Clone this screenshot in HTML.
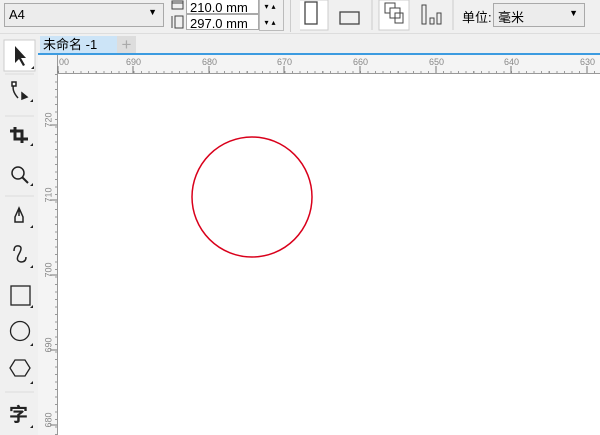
<!DOCTYPE html><html><head><style>
body{margin:0;width:600px;height:435px;overflow:hidden;background:#f0f0f0;font-family:"Liberation Sans","Noto Sans CJK SC",sans-serif;position:relative}
.a{position:absolute}
.box{position:absolute;border:1px solid #a9a9a9;background:#fff;font-size:13px;box-sizing:border-box}
.rl{position:absolute;font-size:9px;color:#888}
</style></head><body>
<div class="box" style="left:4px;top:3px;width:160px;height:24px;background:#ececec;padding:3px 4px">A4<span class="a" style="right:6px;top:3px;font-size:9px">▼</span></div>
<svg class="a" style="left:170px;top:0" width="16" height="32"><rect x="2" y="1" width="11" height="8" fill="none" stroke="#444"/><line x1="2" y1="3" x2="13" y2="3" stroke="#444"/><rect x="5" y="16" width="8" height="12" fill="none" stroke="#444"/><line x1="2" y1="16" x2="2" y2="28" stroke="#444"/></svg>
<div class="box" style="left:186px;top:-2px;width:73px;height:16px;padding:1px 3px">210.0 mm</div>
<div class="box" style="left:186px;top:14px;width:73px;height:16px;padding:1px 3px">297.0 mm</div>
<div class="a" style="left:259px;top:-2px;width:23px;height:31px;background:#f0f0f0;border:1px solid #bbb;font-size:8px;line-height:16px;text-align:center;letter-spacing:3px">▾▴<br>▾▴</div>
<div class="a" style="left:290px;top:0;width:1px;height:32px;background:#ccc"></div>
<svg class="a" style="left:300px;top:0" width="300" height="32">
<rect x="-2" y="0" width="30" height="30" fill="#fff" stroke="#ccc"/>
<rect x="5" y="2" width="12" height="22" fill="none" stroke="#444" stroke-width="1.3"/>
<rect x="40" y="12" width="19" height="12" fill="none" stroke="#444" stroke-width="1.3"/>
<line x1="72" y1="0" x2="72" y2="30" stroke="#ccc"/>
<rect x="79" y="0" width="30" height="30" fill="#fff" stroke="#ccc"/>
<rect x="85" y="3" width="10" height="10" fill="none" stroke="#444"/><rect x="90" y="8" width="10" height="10" fill="#fff" stroke="#444"/><rect x="95" y="13" width="8" height="10" fill="none" stroke="#444"/>
<rect x="122" y="5" width="4" height="19" fill="none" stroke="#444"/><rect x="130" y="18" width="4" height="6" fill="none" stroke="#444"/><rect x="137" y="13" width="4" height="11" fill="none" stroke="#444"/>
<line x1="153" y1="0" x2="153" y2="30" stroke="#ccc"/>
<line x1="591" y1="0" x2="591" y2="30" stroke="#ccc"/>
</svg>
<div class="a" style="left:462px;top:7px;font-size:13px">单位:</div>
<div class="box" style="left:493px;top:3px;width:92px;height:24px;background:#ececec;padding:3px 4px">毫米<span class="a" style="right:6px;top:4px;font-size:9px">▼</span></div>
<div class="a" style="left:0;top:33px;width:600px;height:1px;background:#ddd"></div>
<div class="a" style="left:40px;top:36px;width:76px;height:18px;background:#cce4f7;font-size:13px;padding-left:3px;line-height:18px">未命名 -1</div>
<div class="a" style="left:117px;top:36px;width:19px;height:18px;background:#ddd;color:#aaa;font-size:17px;text-align:center;line-height:17px">+</div>
<div class="a" style="left:38px;top:53px;width:562px;height:2px;background:#3c9be0"></div>
<div class="a" style="left:38px;top:55px;width:562px;height:18px;background:#f4f4f4;border-bottom:1px solid #999"></div>
<div class="a" style="left:58px;top:71px;width:542px;height:2px;background:repeating-linear-gradient(90deg,#999 0 1px,transparent 1px 7.55px)"></div>
<div class="a" style="left:38px;top:55px;width:19px;height:380px;background:#f4f4f4;border-right:1px solid #999"></div>
<div class="a" style="left:55px;top:74px;width:2px;height:361px;background:repeating-linear-gradient(180deg,#999 0 1px,transparent 1px 7.5px)"></div>
<svg class="a" style="left:0;top:0" width="600" height="435">
<g stroke="#777">
<line x1="133" y1="66" x2="133" y2="73"/><line x1="209" y1="66" x2="209" y2="73"/><line x1="284" y1="66" x2="284" y2="73"/><line x1="360" y1="66" x2="360" y2="73"/><line x1="436" y1="66" x2="436" y2="73"/><line x1="511" y1="66" x2="511" y2="73"/><line x1="587" y1="66" x2="587" y2="73"/><line x1="58" y1="66" x2="58" y2="73"/>
<line x1="50" y1="125" x2="57" y2="125"/><line x1="50" y1="200" x2="57" y2="200"/><line x1="50" y1="275" x2="57" y2="275"/><line x1="50" y1="350" x2="57" y2="350"/><line x1="50" y1="425" x2="57" y2="425"/>
</g>
</svg>
<div class="rl" style="left:59px;top:57px">00</div>
<div class="rl" style="left:126px;top:57px">690</div><div class="rl" style="left:202px;top:57px">680</div><div class="rl" style="left:277px;top:57px">670</div><div class="rl" style="left:353px;top:57px">660</div><div class="rl" style="left:429px;top:57px">650</div><div class="rl" style="left:504px;top:57px">640</div><div class="rl" style="left:580px;top:57px">630</div>
<div class="rl" style="left:41px;top:115px;transform:rotate(-90deg)">720</div><div class="rl" style="left:41px;top:190px;transform:rotate(-90deg)">710</div><div class="rl" style="left:41px;top:265px;transform:rotate(-90deg)">700</div><div class="rl" style="left:41px;top:340px;transform:rotate(-90deg)">690</div><div class="rl" style="left:41px;top:415px;transform:rotate(-90deg)">680</div>
<div class="a" style="left:58px;top:74px;width:542px;height:361px;background:#fff"></div>
<svg class="a" style="left:58px;top:74px" width="542" height="361"><circle cx="194" cy="123" r="60" fill="none" stroke="#d9001b" stroke-width="1.5"/></svg>
<svg class="a" style="left:0;top:36px" width="38" height="399">
<rect x="4" y="4" width="31" height="31" fill="#fff" stroke="#ccc"/>
<path d="M15 10 L15 27 L19 23 L23 30 L25 29 L21 22 L26 22 Z" fill="#222"/>
<g fill="#222"><path d="M31 33 l3 0 l0 -3z"/><path d="M30 66 l3 0 l0 -3z"/><path d="M30 110 l3 0 l0 -3z"/><path d="M30 150 l3 0 l0 -3z"/><path d="M30 192 l3 0 l0 -3z"/><path d="M30 232 l3 0 l0 -3z"/><path d="M30 272 l3 0 l0 -3z"/><path d="M30 310 l3 0 l0 -3z"/><path d="M30 348 l3 0 l0 -3z"/><path d="M30 392 l3 0 l0 -3z"/></g>
<g fill="none" stroke="#222" stroke-width="1.5">
<path d="M14 48 q-3 6 4 14"/><rect x="12" y="46" width="4" height="4" fill="#fff"/>
<path d="M22 57 l5 4 l-5 2z" fill="#222"/>
<path d="M15 91 v12 h13 M10 95 h12 v12" stroke-width="3"/>
<circle cx="18" cy="137" r="6"/><path d="M22 141 l6 6" stroke-width="2"/>
<path d="M19 172 l-4 9 l0 5 h8 v-5 z M19 172 v8"/>
<path d="M14 215 q0 -6 5 -5 q4 1 0 8 q-4 7 2 8 q5 0 5 -5"/>
<rect x="11" y="250" width="19" height="19" stroke-width="1.3"/>
<circle cx="20" cy="295" r="9.5" stroke-width="1.3"/>
<path d="M15 324 h10 l5 8 l-5 8 h-10 l-5 -8z" stroke-width="1.3"/>
</g>
<line x1="5" y1="38" x2="34" y2="38" stroke="#ddd"/>
<line x1="5" y1="80" x2="34" y2="80" stroke="#ddd"/>
<line x1="5" y1="160" x2="34" y2="160" stroke="#ddd"/>
<line x1="5" y1="356" x2="34" y2="356" stroke="#ddd"/>
<text x="9" y="385" font-size="19" font-weight="bold" font-family="Noto Sans CJK SC" fill="#222">字</text>
</svg>
</body></html>
